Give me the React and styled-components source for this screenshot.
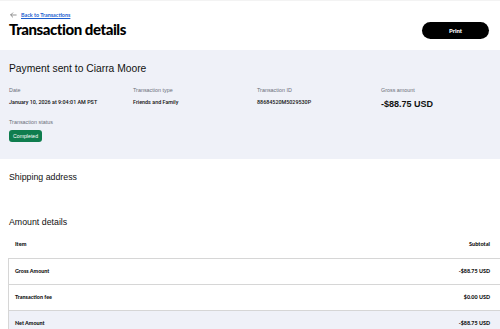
import styled, { createGlobalStyle } from 'styled-components';

const GlobalStyle = createGlobalStyle`
    html, body {
        margin: 0;
        padding: 0;
        background: #fff;
        overflow-x: hidden;
    }
    body {
        font-family: "Liberation Sans", Arial, sans-serif;
        color: #111;
    }
`

const details = [
    { label: 'Date', value: 'January 10, 2026 at 9:04:01 AM PST' },
    { label: 'Transaction type', value: 'Friends and Family' },
    { label: 'Transaction ID', value: '88684520M5029530P' },
    { label: 'Gross amount', value: '-$88.75 USD', big: true },
];

const rows = [
    { item: 'Gross Amount', subtotal: '-$88.75 USD' },
    { item: 'Transaction fee', subtotal: '$0.00 USD' },
    { item: 'Net Amount', subtotal: '-$88.75 USD', total: true },
];

const App = () => {
    return (
        <Page>
            <GlobalStyle />
            <Header>
                <BackLink href="#">
                    <svg width="7" height="6" viewBox="0 0 7 6" fill="none" stroke="#666" strokeWidth="0.7">
                        <path d="M6.6 3H0.6M3 0.6L0.6 3L3 5.4" />
                    </svg>
                    <span>Back to Transactions</span>
                </BackLink>
                <TitleRow>
                    <Title>Transaction details</Title>
                    <PrintButton>Print</PrintButton>
                </TitleRow>
            </Header>

            <Summary>
                <SummaryTitle>Payment sent to Ciarra Moore</SummaryTitle>
                <DetailGrid>
                    {details.map(d => (
                        <Detail key={d.label}>
                            <Label>{d.label}</Label>
                            <Value $big={d.big}>{d.value}</Value>
                        </Detail>
                    ))}
                    <Detail>
                        <Label>Transaction status</Label>
                        <Badge>Completed</Badge>
                    </Detail>
                </DetailGrid>
            </Summary>

            <SectionTitle $gap="12px">Shipping address</SectionTitle>
            <SectionTitle $gap="33px">Amount details</SectionTitle>

            <Table>
                <HeadRow>
                    <HeadCell>Item</HeadCell>
                    <HeadCell>Subtotal</HeadCell>
                </HeadRow>
                <RowBox>
                    {rows.map(r => (
                        <Row key={r.item} $total={r.total}>
                            <Cell>{r.item}</Cell>
                            <Cell>{r.subtotal}</Cell>
                        </Row>
                    ))}
                </RowBox>
            </Table>
        </Page>
    );
}

const Page = styled.div`
    width: 500px;
`

const Header = styled.header`
    height: 50px;
    box-sizing: border-box;
    padding: 10px 11px 0 9px;
    border-top: 1px solid #f3f3f3;
`

const BackLink = styled.a`
    display: flex;
    align-items: center;
    gap: 4px;
    height: 8px;
    margin-bottom: 1px;
    padding-left: 1px;
    text-decoration: none;

    span {
        font-family: Lato, sans-serif;
        font-size: 5.4px;
        font-weight: 700;
        color: #1d5fcf;
        text-decoration: underline;
    }
`

const TitleRow = styled.div`
    display: flex;
    justify-content: space-between;
    align-items: flex-start;
`

const Title = styled.h1`
    margin: 0;
    font-family: Lato, sans-serif;
    font-weight: 900;
    font-size: 15px;
    line-height: 18px;
    letter-spacing: -0.45px;
    color: #000;
`

const PrintButton = styled.button`
    margin-top: 2px;
    width: 67px;
    height: 17px;
    border: none;
    border-radius: 9px;
    background: #000;
    color: #fff;
    font-family: Lato, sans-serif;
    font-weight: 900;
    font-size: 6px;
    padding: 0;
`

const Summary = styled.section`
    background: #eff1f8;
    padding: 12px 9px 17px;
`

const SummaryTitle = styled.h2`
    margin: 0 0 11px;
    font-size: 10.3px;
    font-weight: 400;
    line-height: 14px;
    color: #111;
`

const DetailGrid = styled.div`
    display: grid;
    grid-template-columns: repeat(4, 124px);
    row-gap: 9px;
`

const Detail = styled.div`
    display: flex;
    flex-direction: column;
    align-items: flex-start;
`

const Label = styled.div`
    font-size: 5.4px;
    line-height: 7px;
    color: #6b6f78;
    margin-bottom: 4.5px;
`

const Value = styled.div`
    font-family: ${props => props.$big ? '"Liberation Sans", Arial, sans-serif' : 'Roboto, sans-serif'};
    font-size: ${props => props.$big ? '9px' : '5.4px'};
    line-height: ${props => props.$big ? '11px' : '7px'};
    font-weight: ${props => props.$big ? 700 : 500};
    color: #111;
`

const Badge = styled.span`
    display: inline-flex;
    align-items: center;
    height: 12px;
    padding: 0 4px;
    margin-top: -0.5px;
    border-radius: 3px;
    background: #0f7d4e;
    color: #fff;
    font-size: 5.2px;
`

const SectionTitle = styled.h3`
    margin: ${props => props.$gap} 0 0;
    padding: 0 9px;
    font-size: 8.8px;
    font-weight: 400;
    line-height: 12px;
    color: #111;
`

const Table = styled.div`
    margin: 2px -3px 0 8px;
`

const HeadRow = styled.div`
    display: flex;
    justify-content: space-between;
    align-items: center;
    height: 28px;
    padding: 0 13px 0 7px;
`

const HeadCell = styled.div`
    font-family: Lato, sans-serif;
    font-size: 5.6px;
    font-weight: 900;
    color: #111;
`

const RowBox = styled.div`
    border-top: 1px solid #d6d6d6;
    border-left: 1px solid #d6d6d6;
`

const Row = styled.div`
    display: flex;
    justify-content: space-between;
    align-items: center;
    height: 25px;
    padding: 0 13px 0 6px;
    border-bottom: 1px solid #d6d6d6;
    background: ${props => props.$total ? '#eff1f8' : '#fff'};
`

const Cell = styled.div`
    font-family: Lato, sans-serif;
    font-size: 5.4px;
    font-weight: 900;
    color: #111;
`

export default App;
